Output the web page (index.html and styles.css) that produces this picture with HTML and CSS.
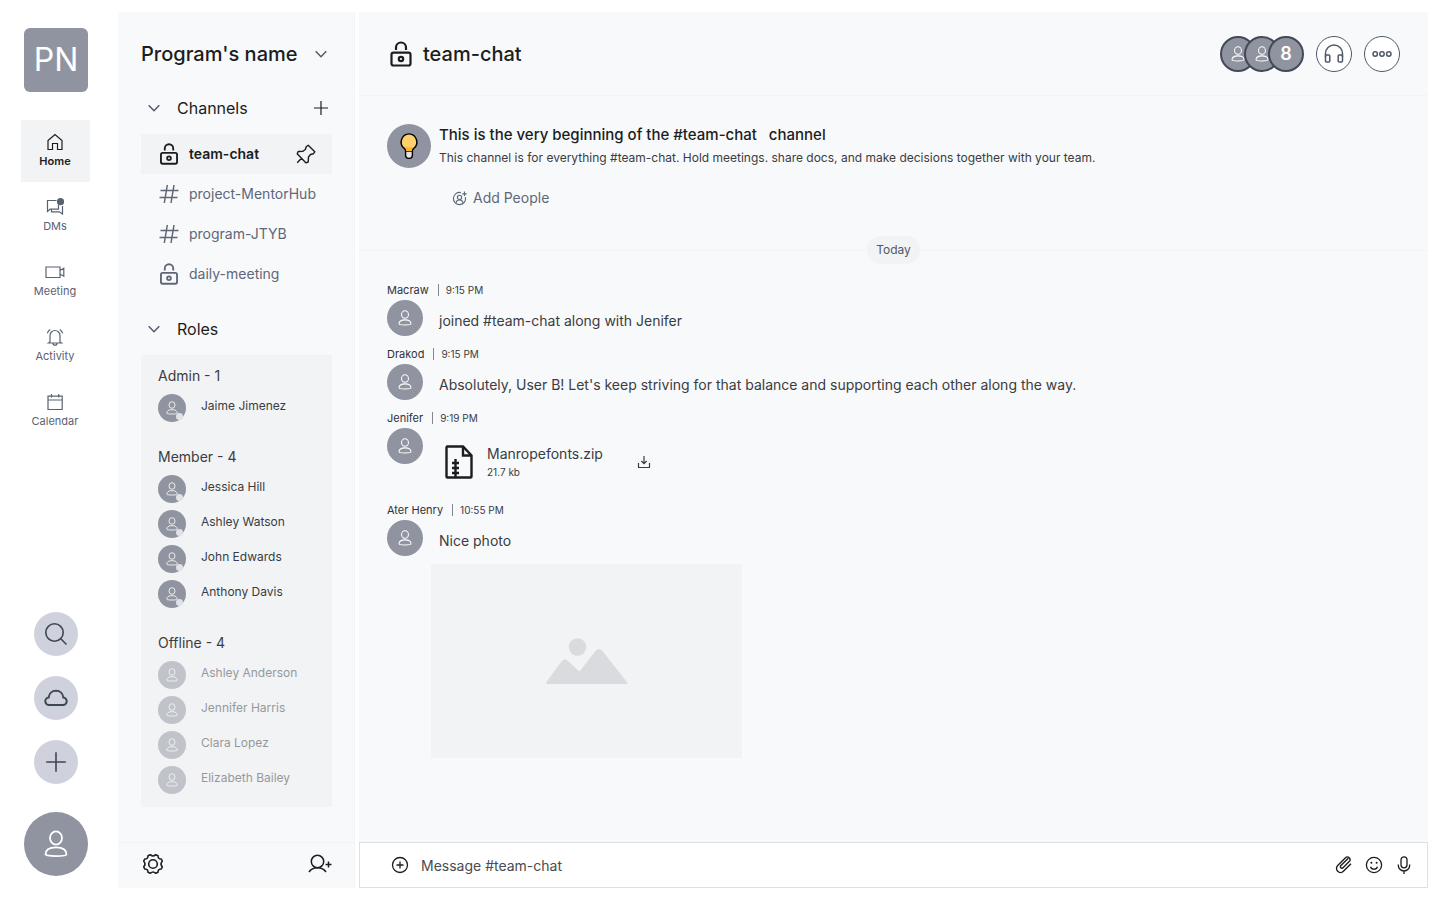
FILE: index.html
```html
<!DOCTYPE html>
<html lang="en">
<head>
<meta charset="utf-8">
<title>team-chat</title>
<link rel="stylesheet" href="styles.css">
</head>
<body>
<svg class="sprite" aria-hidden="true">
  <symbol id="user" viewBox="0 0 24 28"><ellipse cx="12" cy="8" rx="6" ry="6.600"/><path d="M1.500 24.500C1.500 19.800 5 17.300 12 17.300S22.500 19.800 22.500 24.500C22.500 26.600 1.500 26.600 1.500 24.500Z"/></symbol>
  <symbol id="chevron" viewBox="0 0 12 8"><path d="M.7 1.200 6 6.700 11.300 1.200"/></symbol>
  <symbol id="plus" viewBox="0 0 14 14"><path d="M7 0V14M0 7H14"/></symbol>
  <symbol id="lock" viewBox="0 0 22 26"><path d="M6 9V6.500a5 5 0 0 1 10 0V9"/><rect x="1.500" y="11.700" width="19" height="12.800" rx="2"/><circle cx="11" cy="18" r="2.200"/></symbol>
  <symbol id="hash" viewBox="0 0 20 20"><path d="M8.300 1 5.300 19M15 1 12 19M1.500 6.500H19.500M.5 13.500H18.500"/></symbol>
</svg>
<div class="app">
  <nav class="rail" aria-label="Main">
    <div class="logo">PN</div>
    <ul class="rail-nav">
      <li><a class="rail-link is-active" href="#home">
        <svg viewBox="0 0 18 18"><path d="M2 7.500 9 1.500l7 6v9h-4.500V10.500h-5v6H2Z"/></svg>Home</a></li>
      <li><a class="rail-link" href="#dms">
        <svg viewBox="0 0 18 18"><path d="M10.500 2.500H1.500v11l2.600-2.300h1.400M12.500 7v4.200H4.800M5.500 11.200v2.600h8l3 2.300V8"/><circle class="solid" cx="14.500" cy="3.700" r="3.600"/></svg>DMs</a></li>
      <li><a class="rail-link" href="#meeting">
        <svg class="wide" viewBox="0 0 20 18"><path d="M1 4h14v10.500H1ZM15 7.500l3.800-2.300v8L15 11"/></svg>Meeting</a></li>
      <li><a class="rail-link" href="#activity">
        <svg viewBox="0 0 18 18"><path d="M4 14V7.500a5 5 0 0 1 10 0V14l1.500 1H2.500ZM7 15.200a2 2 0 0 0 4 0M1.300 5.300A8 8 0 0 1 4.200 1.600M16.700 5.300a8 8 0 0 0-2.900-3.700"/></svg>Activity</a></li>
      <li><a class="rail-link" href="#calendar">
        <svg viewBox="0 0 18 18"><path d="M2 3.200h14.200v13.300H2ZM2 7h14.200M5.500 1v3.500M12.700 1v3.500"/></svg>Calendar</a></li>
    </ul>
    <div class="rail-tools">
      <button class="tool" aria-label="Search"><svg viewBox="0 0 24 24"><circle cx="10.500" cy="10.500" r="8.700"/><path d="m16.800 16.800 5.700 5.700"/></svg></button>
      <button class="tool tool-cloud" aria-label="Files"><svg viewBox="0 0 24 24"><path d="M5.500 19a3.800 3.800 0 0 1-.8-7.600C5 7.600 8 4.800 12 4.800s7 2.800 7.300 6.600a3.800 3.800 0 0 1-.8 7.600Z"/></svg></button>
      <button class="tool" aria-label="Create"><svg viewBox="0 0 24 24"><path d="M12 2.200v19.600M2.200 12h19.600"/></svg></button>
    </div>
    <button class="avatar avatar-xl" aria-label="Profile"><svg><use href="#user"/></svg></button>
  </nav>

  <aside class="sidebar">
    <div class="sidebar-body">
      <button class="program"><span>Program's name</span><svg class="chevron"><use href="#chevron"/></svg></button>
      <div class="section-head">
        <svg class="chevron"><use href="#chevron"/></svg><h2>Channels</h2>
        <button class="add" aria-label="Add channel"><svg><use href="#plus"/></svg></button>
      </div>
      <ul class="channels">
        <li><a class="channel is-active" href="#team-chat"><svg class="lock"><use href="#lock"/></svg><span>team-chat</span>
          <svg class="pin" viewBox="0 0 20 20"><path d="M12.200 1.200 18.800 7.800 17.300 9.800 14.500 10.500 12.500 13 12.200 18 9.800 18.800 1.200 9.800 2.200 7.500 7 7.300 9.500 5.300 10.200 2.700ZM5.500 14.300 1.200 18.800"/></svg></a></li>
        <li><a class="channel" href="#mentorhub"><svg class="hash"><use href="#hash"/></svg><span>project-MentorHub</span></a></li>
        <li><a class="channel" href="#jtyb"><svg class="hash"><use href="#hash"/></svg><span>program-JTYB</span></a></li>
        <li><a class="channel" href="#daily"><svg class="lock"><use href="#lock"/></svg><span>daily-meeting</span></a></li>
      </ul>
      <div class="section-head section-roles">
        <svg class="chevron"><use href="#chevron"/></svg><h2>Roles</h2>
      </div>
      <div class="roles">
        <section class="role">
          <h3>Admin - 1</h3>
          <ul>
            <li><span class="avatar avatar-s online"><svg><use href="#user"/></svg></span><span>Jaime Jimenez</span></li>
          </ul>
        </section>
        <section class="role">
          <h3>Member - 4</h3>
          <ul>
            <li><span class="avatar avatar-s online"><svg><use href="#user"/></svg></span><span>Jessica Hill</span></li>
            <li><span class="avatar avatar-s online"><svg><use href="#user"/></svg></span><span>Ashley Watson</span></li>
            <li><span class="avatar avatar-s online"><svg><use href="#user"/></svg></span><span>John Edwards</span></li>
            <li><span class="avatar avatar-s online"><svg><use href="#user"/></svg></span><span>Anthony Davis</span></li>
          </ul>
        </section>
        <section class="role">
          <h3>Offline - 4</h3>
          <ul class="offline">
            <li><span class="avatar avatar-s"><svg><use href="#user"/></svg></span><span>Ashley Anderson</span></li>
            <li><span class="avatar avatar-s"><svg><use href="#user"/></svg></span><span>Jennifer Harris</span></li>
            <li><span class="avatar avatar-s"><svg><use href="#user"/></svg></span><span>Clara Lopez</span></li>
            <li><span class="avatar avatar-s"><svg><use href="#user"/></svg></span><span>Elizabeth Bailey</span></li>
          </ul>
        </section>
      </div>
    </div>
    <footer class="sidebar-foot">
      <button aria-label="Settings"><svg class="gear" viewBox="0 0 24 24"><circle cx="12" cy="12" r="4.300"/><path d="M9.300 2.700Q12 5.300 14.700 2.700L17 3.700Q16.900 7.100 20.300 7L21.300 9.300Q18.700 12 21.300 14.700L20.300 17Q16.900 16.900 17 20.300L14.700 21.300Q12 18.700 9.300 21.300L7 20.300Q7.100 16.900 3.700 17L2.700 14.700Q5.300 12 2.700 9.300L3.700 7Q7.100 7.100 7 3.700Z"/></svg></button>
      <button aria-label="Invite"><svg class="invite" viewBox="0 0 24 20"><circle cx="9.500" cy="7.500" r="6.200"/><path d="M1 18c1.800-2.800 4.800-4.300 8.500-4.300S16.200 15.200 18 18M20.500 7.500v6M17.500 10.500h6"/></svg></button>
    </footer>
  </aside>

  <main class="main">
    <header class="main-head">
      <svg class="lock-big"><use href="#lock"/></svg>
      <h1>team-chat</h1>
      <div class="head-actions">
        <button class="people" aria-label="8 members">
          <span class="face"><svg><use href="#user"/></svg></span><span class="face"><svg><use href="#user"/></svg></span><span class="face">8</span>
        </button>
        <button class="round" aria-label="Audio"><svg viewBox="0 0 20 20"><path d="M1.500 13V9.500a8.500 8.500 0 0 1 17 0V13"/><rect x="1.500" y="11" width="4.300" height="7" rx="1"/><rect x="14.200" y="11" width="4.300" height="7" rx="1"/></svg></button>
        <button class="round" aria-label="More"><svg viewBox="0 0 20 20"><circle cx="3.200" cy="10" r="2.200"/><circle cx="10" cy="10" r="2.200"/><circle cx="16.800" cy="10" r="2.200"/></svg></button>
      </div>
    </header>

    <div class="feed">
      <section class="intro">
        <span class="avatar avatar-l">
          <svg class="bulb" viewBox="0 0 18 26"><path fill="#000" d="M9 .2a8.800 8.800 0 0 0-5.300 15.600c1 .9 1.200 1.500 1.200 2.700V22A4.100 4.100 0 0 0 13.100 22v-3.500c0-1.200.2-1.800 1.200-2.700A8.800 8.800 0 0 0 9 .2Z"/><path fill="#ffd06b" d="M9 1.600A7.400 7.400 0 0 0 4.700 14.800c1.100.9 1.600 1.900 1.600 3.200h5.400c0-1.300.5-2.300 1.600-3.200A7.400 7.400 0 0 0 9 1.600Z"/><path fill="#fdb61b" d="M6.200 13.500 9 15l2.800-1.500V18H6.200Z"/><path fill="#e3e5ea" d="M6.300 18.700h5.400V22a2.700 2.700 0 0 1-5.400 0Z"/></svg>
        </span>
        <div class="intro-text">
          <h2>This is the very beginning of the #team-chat &nbsp;&nbsp;channel</h2>
          <p>This channel is for everything #team-chat. Hold meetings. share docs, and make decisions together with your team.</p>
          <button class="add-people">
            <svg viewBox="0 0 16 16"><path d="M9.500 1.700A6.500 6.500 0 1 0 14.300 6.500M13.300.6v4.800M10.900 3h4.800"/><circle cx="8" cy="6.800" r="2.300"/><path d="M4.300 12.700c.3-2 1.700-3.100 3.700-3.100s3.400 1.100 3.700 3.100"/></svg>Add People</button>
        </div>
      </section>
      <div class="day"><span>Today</span></div>

      <article class="message">
        <p class="meta"><b>Macraw</b><time>9:15 PM</time></p>
        <div class="row"><span class="avatar avatar-m"><svg><use href="#user"/></svg></span><p>joined #team-chat along with Jenifer</p></div>
      </article>
      <article class="message">
        <p class="meta"><b>Drakod</b><time>9:15 PM</time></p>
        <div class="row"><span class="avatar avatar-m"><svg><use href="#user"/></svg></span><p>Absolutely, User B! Let's keep striving for that balance and supporting each other along the way.</p></div>
      </article>
      <article class="message">
        <p class="meta"><b>Jenifer</b><time>9:19 PM</time></p>
        <div class="row"><span class="avatar avatar-m"><svg><use href="#user"/></svg></span>
          <div class="file">
            <svg class="zip" viewBox="0 0 28 34"><path d="M2.200 1.500H18L26.500 10.500V31.500a1 1 0 0 1-1 1H2.500a1 1 0 0 1-1-1V2.500Z"/><path d="M18 1.500V10.500h8.500"/><path d="M10.500 14v18M7 18h7M7 23h7M7 28h7"/></svg>
            <div class="file-info"><strong>Manropefonts.zip</strong><small>21.7 kb</small></div>
            <button class="download" aria-label="Download"><svg viewBox="0 0 14 14"><path d="M7 1v7.500M4.300 6 7 8.700 9.700 6"/><path d="M1.500 8v4.500h11V8"/></svg></button>
          </div>
        </div>
      </article>
      <article class="message">
        <p class="meta"><b>Ater Henry</b><time>10:55 PM</time></p>
        <div class="row"><span class="avatar avatar-m"><svg><use href="#user"/></svg></span><p>Nice photo</p></div>
        <div class="photo"><svg viewBox="0 0 82 46"><circle cx="31.500" cy="9" r="8.700"/><path d="M1 46Q-.5 45.500.8 43.500L15.500 23.500Q19 19.500 22.500 23.500L33.500 33.500 49.500 13Q53 9 56.500 13L80.500 43.500Q82 45.500 80.500 46Z"/></svg></div>
      </article>
    </div>

    <form class="composer">
      <button type="button" aria-label="Attach"><svg viewBox="0 0 18 18"><circle cx="9" cy="9" r="7.500"/><path d="M9 5.500v7M5.500 9h7"/></svg></button>
      <input type="text" aria-label="Message" placeholder="Message #team-chat">
      <button type="button" aria-label="Add file"><svg class="clip" viewBox="0 0 18 18"><path d="M13.300 2.200 5.700 9.800a1.500 1.500 0 0 0 2.100 2.100l6.400-6.400a2.600 2.600 0 0 0-3.700-3.700L2.700 9.600a4 4 0 0 0 5.700 5.700L16 7.700"/></svg></button>
      <button type="button" aria-label="Emoji"><svg viewBox="0 0 18 18"><circle cx="9" cy="9" r="7.600"/><path d="M5.500 10.700a3.700 3.700 0 0 0 7 0"/><circle class="solid" cx="6.400" cy="6.800" r="1"/><circle class="solid" cx="11.600" cy="6.800" r="1"/></svg></button>
      <button type="button" aria-label="Record"><svg viewBox="0 0 18 18"><rect x="6" y=".8" width="6" height="11" rx="3"/><path d="M3.300 8.500v.8a5.700 5.700 0 0 0 11.400 0v-.8M9 15v3"/></svg></button>
    </form>
  </main>
</div>
</body>
</html>
```
FILE: styles.css
```css
* { box-sizing: border-box; }
body {
  margin: 0;
  background: #fff;
  color: #1b1d21;
  font: 400 14px/20px Inter, "Liberation Sans", sans-serif;
}
h1, h2, h3, p, ul { margin: 0; padding: 0; font: inherit; }
ul { list-style: none; }
a { color: inherit; text-decoration: none; }
button {
  display: flex;
  align-items: center;
  justify-content: center;
  padding: 0;
  border: 0;
  background: none;
  color: inherit;
  font: inherit;
}
svg { display: block; flex: none; fill: none; stroke: currentColor; stroke-width: 1.200; }
.sprite { display: none; }

.app {
  display: grid;
  grid-template-columns: 106px 237px minmax(0, 1fr);
  min-height: 100vh;
  padding: 12px;
}

/* icon rail */
.rail { display: flex; flex-direction: column; align-items: center; padding: 16px 18px 12px 0; }
.logo {
  display: grid;
  place-items: center;
  width: 64px;
  height: 64px;
  border-radius: 6px;
  background: #9094a0;
  color: #fff;
  font-size: 32px;
  line-height: 40px;
}
.rail-nav { display: flex; flex-direction: column; gap: 3px; margin: 28px 2px 0 0; }
.rail-link {
  display: flex;
  flex-direction: column;
  align-items: center;
  gap: 1px;
  width: 69px;
  height: 62px;
  padding-top: 13px;
  color: #5a6272;
  font-size: 11px;
  line-height: 18px;
}
.rail-link svg { width: 18px; height: 18px; }
.rail-link .wide { width: 20px; }
.rail-link.is-active { background: #f2f3f5; color: #1b1d21; font-weight: 600; }
.solid { fill: currentColor; stroke: none; }
.rail-tools { display: flex; flex-direction: column; gap: 20px; margin: auto 0 28px; }
.tool { width: 44px; height: 44px; border-radius: 50%; background: #cfd1dc; color: #3f4654; }
.tool svg { width: 24px; height: 24px; stroke-width: 1.600; }
.tool-cloud svg { stroke-width: 2; }

/* avatars */
.avatar {
  position: relative;
  display: grid;
  flex: none;
  place-items: center;
  border-radius: 50%;
  background: #9094a0;
  color: #fff;
}
.avatar-xl { width: 64px; height: 64px; }
.avatar-xl svg { width: 24px; height: 28px; stroke-width: 1.800; }
.avatar-l { width: 44px; height: 44px; }
.avatar-m { width: 36px; height: 36px; }
.avatar-m svg { width: 14px; height: 16px; stroke-width: 1.800; }
.avatar-s { width: 28px; height: 28px; }
.avatar-s svg { width: 12px; height: 14px; stroke-width: 1.600; }
.online::after {
  content: "";
  position: absolute;
  right: 3px;
  bottom: 2px;
  width: 7px;
  height: 7px;
  border-radius: 50%;
  background: #e0e2e7;
}

/* sidebar */
.sidebar { display: flex; flex-direction: column; background: #f8f9fb; border-right: 1px solid #f3f4f6; }
.sidebar-body { flex: 1; padding: 24px 22px 0 23px; }
.program { justify-content: space-between; width: 100%; padding-right: 5px; font-size: 20px; font-weight: 500; line-height: 36px; }
.chevron { width: 12px; height: 8px; color: #4f5869; stroke-width: 1.400; }
.section-head { display: flex; align-items: center; gap: 17px; height: 20px; margin-top: 26px; padding: 0 4px 0 7px; font-size: 16px; }
.add { margin-left: auto; }
.add svg { width: 14px; height: 14px; }
.channels { margin-top: 16px; }
.channel { display: flex; align-items: center; gap: 10px; height: 40px; padding: 0 16px 0 18px; color: #5f6777; }
.channel .lock { width: 20px; height: 22px; stroke-width: 2.200; }
.channel .hash { width: 20px; height: 20px; stroke-width: 1.500; }
.channel.is-active { background: #f2f3f5; color: #1b1d21; font-weight: 600; }
.pin { width: 20px; height: 20px; margin-left: auto; stroke-width: 1.400; stroke-linejoin: round; }
.section-roles { margin-top: 25px; }
.roles { display: flex; flex-direction: column; gap: 25px; margin-top: 16px; padding: 11px 17px 13px; background: #f2f3f5; color: #3a3c41; }
.role ul { display: flex; flex-direction: column; gap: 7px; margin-top: 8px; font-size: 12px; line-height: 24px; }
.role li { display: flex; gap: 15px; }
.offline { opacity: .5; }
.sidebar-foot {
  display: flex;
  align-items: center;
  justify-content: space-between;
  height: 46px;
  padding: 0 22px 3px 23px;
  border-top: 1px solid #f1f2f5;
}
.gear { width: 24px; height: 24px; stroke-width: 1.600; stroke-linejoin: round; }
.invite { width: 24px; height: 20px; stroke-width: 1.500; }

/* conversation */
.main { display: flex; flex-direction: column; margin-left: 4px; background: #f8f9fb; }
.main-head { display: flex; align-items: center; height: 84px; padding: 0 28px 0 31px; border-bottom: 1px solid #f3f4f6; }
.lock-big { width: 22px; height: 26px; stroke-width: 2.200; }
.main-head h1 { margin-left: 11px; font-size: 20px; font-weight: 500; }
.head-actions { display: flex; gap: 12px; margin-left: auto; }
.people { display: flex; }
.face {
  display: grid;
  place-items: center;
  width: 36px;
  height: 36px;
  border: 2px solid #424957;
  border-radius: 50%;
  background: #9094a0;
  color: #fff;
  font-size: 18px;
  font-weight: 600;
}
.face + .face { margin-left: -12px; }
.face svg { width: 14px; height: 16px; stroke-width: 1.800; }
.round { width: 36px; height: 36px; border: 1px solid #4f5869; border-radius: 50%; background: #fff; color: #4f5869; }
.round svg { width: 20px; height: 20px; stroke-width: 1.500; }

.feed { flex: 1; padding-bottom: 24px; color: #3a3c41; }
.intro { display: flex; gap: 8px; padding: 28px 28px 0; }
.bulb { width: 18px; height: 26px; stroke: none; }
.intro-text h2 { margin-top: 1px; color: #1b1d21; font-size: 15px; font-weight: 500; }
.intro-text p { margin-top: 3px; font-size: 12px; }
.add-people { gap: 6px; margin: 20px 0 0 13px; color: #5f6777; }
.add-people svg { width: 15px; height: 15px; }
.day { display: flex; align-items: center; margin-top: 28px; color: #4f5869; font-size: 12px; line-height: 28px; }
.day::before, .day::after { content: ""; flex: 1; height: 1px; background: #f2f3f5; }
.day span { padding: 0 9px; border-radius: 14px; background: #f2f3f5; }
.message { margin-bottom: 8px; padding: 0 28px; }
.day + .message { margin-top: 16px; }
.meta { display: flex; align-items: center; font-size: 10px; }
.meta b { padding-right: 9px; color: #303237; font-size: 11px; font-weight: 400; }
.meta time { padding-left: 7px; border-left: 1px solid #85878e; line-height: 12px; }
.row { display: flex; gap: 16px; }
.row > p { padding-top: 11px; }
.file { display: flex; align-items: center; height: 64px; padding: 4px 0 0 6px; }
.zip { width: 28px; height: 34px; color: #1b1d21; stroke-width: 2.400; }
.file-info { display: flex; flex-direction: column; margin: 0 34px 0 14px; }
.file-info strong { font-weight: 400; }
.file-info small { font-size: 10px; line-height: 16px; }
.download svg { width: 14px; height: 14px; }
.photo { display: grid; place-items: center; width: 311px; height: 194px; margin: 8px 0 0 44px; background: #f2f3f5; }
.photo svg { width: 82px; height: 46px; fill: #d9dbdf; stroke: none; }

.composer { display: flex; align-items: center; gap: 12px; height: 46px; padding: 0 14px 0 31px; border: 1px solid #dcdfe5; background: #fff; }
.composer svg { width: 18px; height: 18px; stroke-width: 1.300; }
.composer .clip { stroke-width: 1.400; }
.composer input { flex: 1; min-width: 0; padding: 2px 0 0; border: 0; outline: 0; background: none; color: #1b1d21; font: inherit; }
.composer input::placeholder { color: #494b50; opacity: 1; }
```
